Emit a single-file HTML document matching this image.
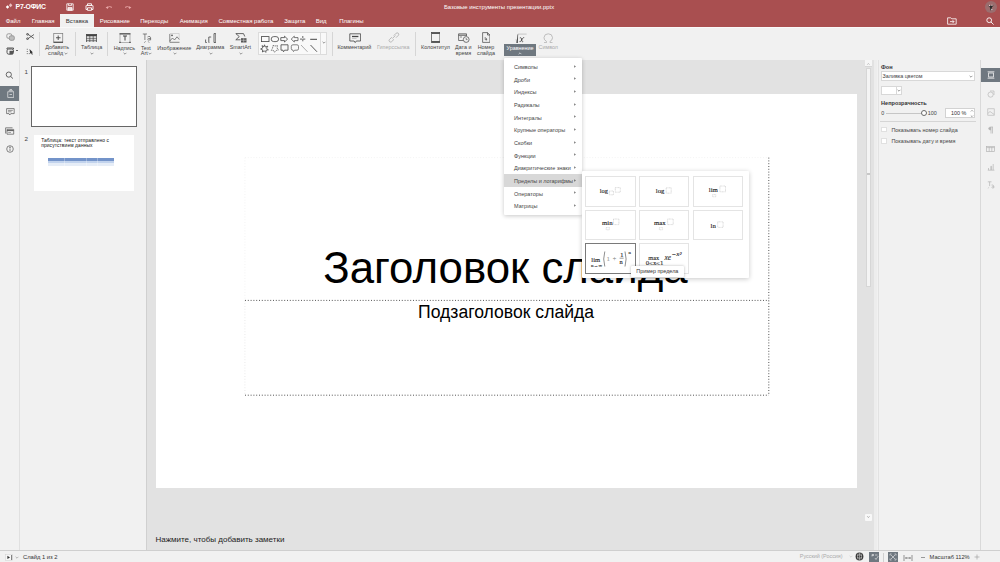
<!DOCTYPE html>
<html><head><meta charset="utf-8">
<style>
*{margin:0;padding:0;box-sizing:border-box}
html,body{width:1000px;height:562px;overflow:hidden;background:#f1f1f1;font-family:"Liberation Sans",sans-serif;color:#333}
.a{position:absolute}
.t{position:absolute;white-space:nowrap}
#hdr{left:0;top:0;width:1000px;height:26.5px;background:#a94f50}
#tb{left:0;top:26.5px;width:1000px;height:33px;background:#f1f1f1}
#lsb{left:0;top:59.5px;width:19.5px;height:491px;background:#f1f1f1;border-right:1px solid #e0e0e0}
#thp{left:19.5px;top:59.5px;width:127px;height:491px;background:#f1f1f1;border-right:1px solid #d0d0d0}
#main{left:146.5px;top:59.5px;width:727px;height:491px;background:#e2e2e2}
#slide{left:155.5px;top:94px;width:701px;height:393.5px;background:#fff}
#rp{left:873.7px;top:59.5px;width:107px;height:491px;background:#f1f1f1;border-left:3.8px solid #ededed}
#rsb{left:980px;top:59.5px;width:20px;height:491px;background:#f1f1f1;border-left:1px solid #d9d9d9}
#sb{left:0;top:550px;width:1000px;height:12px;background:#f1f1f1;border-top:1px solid #cfcfcf}
</style></head><body>
<div id="hdr" class="a"></div>
<div id="tb" class="a"></div>
<div id="lsb" class="a"></div>
<div id="thp" class="a"></div>
<div id="main" class="a"></div>
<div id="slide" class="a"></div>
<div id="rp" class="a"></div>
<div class="a" style="left:877.5px;top:59.5px;width:0.7px;height:491px;background:#e2e2e2"></div>
<div class="a" style="left:0;top:26.5px;width:1000px;height:1.3px;background:#f9f9f9"></div>
<div id="rsb" class="a"></div>
<div id="sb" class="a"></div>


<!-- header -->
<svg class="a" style="left:5px;top:2px" width="9" height="8" viewBox="0 0 9 8"><path d="M0.8 5 L2.5 3.2 L4.2 5 L2.5 6.8Z" fill="#fff"/><path d="M3.8 3.2 L5.6 1.2 L7.4 3.2 L5.6 5.2Z" fill="#ecc0c0"/></svg>
<div class="t" style="left:15.6px;top:2.5px;font-size:6.9px;line-height:8px;font-weight:bold;color:#fff;letter-spacing:-0.25px">Р7-ОФИС</div>
<svg class="a" style="left:65.5px;top:3px" width="8" height="8" viewBox="0 0 8 8" fill="none" stroke="#fff" stroke-width="0.8"><path d="M0.8 0.8 H7.2 V7.2 H0.8Z"/><path d="M2.4 0.8 V2.6 H5.6 V0.8"/><path d="M2 4.6 H6 V7.2 H2Z" fill="#f0dada"/></svg>
<svg class="a" style="left:84.5px;top:3px" width="9" height="8" viewBox="0 0 9 8" fill="none" stroke="#fff" stroke-width="0.9"><path d="M2.5 2.5 V0.8 H6.5 V2.5"/><path d="M2 6.5 H1 V2.8 Q1 2.5 1.5 2.5 H7.5 Q8 2.5 8 2.8 V6.5 H7"/><path d="M2.5 4.8 H6.5 V7.3 H2.5Z"/></svg>
<svg class="a" style="left:104.5px;top:4px" width="8" height="6" viewBox="0 0 8 6" fill="none" stroke="#e6a2a2" stroke-width="1"><path d="M2.2 3.6 Q4.5 1.6 7 3.4"/><path d="M0.6 3.6 L3 2.2 L3 5Z" fill="#eaa9a9" stroke="none"/></svg>
<svg class="a" style="left:123.5px;top:4px" width="8" height="6" viewBox="0 0 8 6" fill="none" stroke="#e6a2a2" stroke-width="1"><path d="M5.8 3.6 Q3.5 1.6 1 3.4"/><path d="M7.4 3.6 L5 2.2 L5 5Z" fill="#eaa9a9" stroke="none"/></svg>
<div class="t" style="left:444px;top:3px;font-size:5.9px;line-height:8px;color:#fff">Базовые инструменты презентации.pptx</div>
<div class="a" style="left:984.5px;top:0.8px;width:12px;height:12px;border-radius:50%;background:#9b6d6e"></div>
<svg class="a" style="left:985.5px;top:2px" width="10" height="10" viewBox="0 0 10 10"><path d="M2 3.5 L4 3 L5 3.8 L6.5 2.8 L7.5 3.8 L6 5 L5.5 8 L4.5 8.5 L4 5.5Z" fill="#2a2a2a"/><circle cx="3.5" cy="3.5" r="0.8" fill="#e9c8c8"/><circle cx="6" cy="3.2" r="0.7" fill="#e9c8c8"/><circle cx="5.8" cy="7.5" r="0.7" fill="#cfcfcf"/></svg>
<div class="a" style="left:60px;top:14px;width:34px;height:13px;background:#f1f1f1"></div>
<div class="t" style="left:5.7px;top:16.5px;font-size:6px;line-height:9px;color:#fff">Файл</div>
<div class="t" style="left:31.7px;top:16.5px;font-size:6px;line-height:9px;color:#fff">Главная</div>
<div class="t" style="left:65.7px;top:16.5px;font-size:6px;line-height:9px;color:#333">Вставка</div>
<div class="t" style="left:99.7px;top:16.5px;font-size:6px;line-height:9px;color:#fff">Рисование</div>
<div class="t" style="left:140.2px;top:16.5px;font-size:6px;line-height:9px;color:#fff">Переходы</div>
<div class="t" style="left:179.7px;top:16.5px;font-size:6px;line-height:9px;color:#fff">Анимация</div>
<div class="t" style="left:218.5px;top:16.5px;font-size:6px;line-height:9px;color:#fff">Совместная работа</div>
<div class="t" style="left:284.2px;top:16.5px;font-size:6px;line-height:9px;color:#fff">Защита</div>
<div class="t" style="left:315.7px;top:16.5px;font-size:6px;line-height:9px;color:#fff">Вид</div>
<div class="t" style="left:339.2px;top:16.5px;font-size:6px;line-height:9px;color:#fff">Плагины</div>
<svg class="a" style="left:946.5px;top:16.5px" width="10" height="8" viewBox="0 0 10 8" fill="none" stroke="#fff" stroke-width="0.8"><path d="M0.6 0.8 H3.8 L4.8 1.8 H9.2 V7.2 H0.6Z"/><path d="M3 4.6 H7 M5.6 3.2 L7 4.6 L5.6 6"/></svg>
<svg class="a" style="left:986px;top:17px" width="8" height="8" viewBox="0 0 8 8" fill="none" stroke="#fff" stroke-width="0.9"><circle cx="3.2" cy="3.2" r="2.4"/><path d="M5 5 L7.6 7.6"/></svg>

<!-- toolbar -->
<svg class="a" style="left:5.5px;top:32.5px" width="9" height="8" viewBox="0 0 9 8" fill="none" stroke="#9a9a9a" stroke-width="1"><rect x="0.8" y="0.8" width="5" height="4.5" rx="1.5"/><rect x="3.3" y="2.8" width="5" height="4.5" rx="1.5" fill="#bdbdbd"/></svg>
<svg class="a" style="left:25.5px;top:33px" width="9" height="7" viewBox="0 0 9 7" fill="none" stroke="#444" stroke-width="0.8"><path d="M1.5 1 L8 5.5 M1.5 6 L8 1.5"/><circle cx="1.5" cy="1.3" r="0.9"/><circle cx="1.5" cy="5.7" r="0.9"/></svg>
<svg class="a" style="left:5.5px;top:46.5px" width="9" height="8" viewBox="0 0 9 8" fill="none" stroke="#444" stroke-width="0.9"><path d="M1 2.2 V1 H7.5 V2.2"/><rect x="1" y="2" width="6.5" height="5.2" rx="1.8"/><rect x="3.5" y="3.8" width="3.5" height="3.4" fill="#555" stroke="none"/></svg>
<div class="a" style="left:16px;top:50px;width:2.2px;height:0.6px;background:#666"></div>
<svg class="a" style="left:25.5px;top:47.5px" width="8" height="7" viewBox="0 0 8 7"><g fill="#555"><rect x="0.8" y="0.8" width="0.9" height="0.9"/><rect x="0.8" y="3" width="0.9" height="0.9"/><rect x="0.8" y="5.2" width="0.9" height="0.9"/><rect x="2.8" y="5.2" width="0.9" height="0.9"/></g><path d="M3.5 1 L7 4.5 L5.8 4.6 L6.8 6.3 L6 6.7 L5 5 L4.2 5.8Z" fill="#333"/></svg>
<div class="a" style="left:38.9px;top:31.5px;width:1px;height:24.0px;background:#d6d6d6"></div>
<svg class="a" style="left:53px;top:33px" width="10.5" height="10" viewBox="0 0 10.5 10" fill="none" stroke="#444"><rect x="0.75" y="0.5" width="9" height="8.6" stroke-width="0.7" stroke="#777"/><path d="M0.5 9.3 H10" stroke-width="1"/><path d="M5.2 2.5 V7 M3 4.75 H7.5" stroke-width="0.9"/></svg>
<div class="t" style="left:7.100000000000001px;width:100px;text-align:center;top:43.40px;font-size:5.4px;line-height:8px;color:#444">Добавить</div>
<div class="t" style="left:5.600000000000001px;width:100px;text-align:center;top:49.00px;font-size:5.4px;line-height:8px;color:#444">слайд</div>
<svg class="a" style="left:64.3px;top:51.9px" width="4" height="3" viewBox="0 0 4 3"><path d="M0.6 0.8 L2 2.2 L3.4 0.8" fill="none" stroke="#555" stroke-width="0.6"/></svg>
<div class="a" style="left:74.5px;top:31.5px;width:1px;height:24.0px;background:#d6d6d6"></div>
<svg class="a" style="left:86px;top:33.5px" width="11" height="8.5" viewBox="0 0 11 8.5"><rect x="0.3" y="0.3" width="10.4" height="7.9" fill="none" stroke="#444" stroke-width="0.8"/><rect x="0.3" y="0.3" width="10.4" height="2" fill="#444"/><path d="M0.3 4.3 H10.7 M0.3 6.3 H10.7 M3.8 2 V8.2 M7.2 2 V8.2" stroke="#444" stroke-width="0.7"/></svg>
<div class="t" style="left:41.599999999999994px;width:100px;text-align:center;top:43.40px;font-size:5.4px;line-height:8px;color:#444">Таблица</div>
<svg class="a" style="left:89.8px;top:52.1px" width="4" height="3" viewBox="0 0 4 3"><path d="M0.6 0.8 L2 2.2 L3.4 0.8" fill="none" stroke="#555" stroke-width="0.6"/></svg>
<div class="a" style="left:107.2px;top:31.5px;width:1px;height:24.0px;background:#d6d6d6"></div>
<svg class="a" style="left:118.5px;top:32.5px" width="12" height="10.5" viewBox="0 0 12 10.5" fill="none" stroke="#444"><rect x="1" y="1" width="10" height="8.6" stroke-width="0.6" stroke="#888"/><path d="M0.5 0.8 H11.5" stroke-width="1.1"/><path d="M4 3 H8 M6 3 V7.5" stroke-width="1"/><rect x="0.3" y="8.8" width="1.4" height="1.4" fill="#444" stroke="none"/><rect x="10.3" y="8.8" width="1.4" height="1.4" fill="#444" stroke="none"/></svg>
<svg class="a" style="left:141.5px;top:32.5px" width="10" height="10.5" viewBox="0 0 10 10.5" fill="none" stroke="#555" stroke-width="0.7"><path d="M0.8 1 H5 M2.9 1 V7"/><path d="M5.5 4 Q6.5 3.2 8 3.6 Q8.6 4 8.6 5 V7.2 M8.6 5.5 Q6 5.2 5.6 6.3 Q5.8 7.5 8.4 6.8"/><path d="M2 9.8 L3.8 8.3 M5.8 8.3 L7.6 9.8" stroke-width="0.5"/></svg>
<div class="t" style="left:74.4px;width:100px;text-align:center;top:43.70px;font-size:5.4px;line-height:8px;color:#444">Надпись</div>
<svg class="a" style="left:122.7px;top:52.1px" width="4" height="3" viewBox="0 0 4 3"><path d="M0.6 0.8 L2 2.2 L3.4 0.8" fill="none" stroke="#555" stroke-width="0.6"/></svg>
<div class="t" style="left:95.9px;width:100px;text-align:center;top:43.70px;font-size:5.4px;line-height:8px;color:#444">Text</div>
<div class="t" style="left:94.30000000000001px;width:100px;text-align:center;top:49.00px;font-size:5.4px;line-height:8px;color:#444">Art</div>
<svg class="a" style="left:148.3px;top:51.8px" width="4" height="3" viewBox="0 0 4 3"><path d="M0.6 0.8 L2 2.2 L3.4 0.8" fill="none" stroke="#555" stroke-width="0.6"/></svg>
<svg class="a" style="left:168.5px;top:32.5px" width="11" height="10.5" viewBox="0 0 11 10.5" fill="none" stroke="#555" stroke-width="0.7"><path d="M0.8 1 V9.3 H10.5"/><path d="M0.8 8 L3.5 5 L5.5 7 L8 3.8 L10.3 6.5"/><circle cx="3" cy="2.3" r="0.9" fill="#555" stroke="none"/><path d="M0.8 0.5 H10.2 V6.8" stroke="#aaa" stroke-width="0.4"/></svg>
<div class="t" style="left:124.19999999999999px;width:100px;text-align:center;top:43.50px;font-size:5.4px;line-height:8px;color:#444">Изображение</div>
<svg class="a" style="left:172.5px;top:52.1px" width="4" height="3" viewBox="0 0 4 3"><path d="M0.6 0.8 L2 2.2 L3.4 0.8" fill="none" stroke="#555" stroke-width="0.6"/></svg>
<svg class="a" style="left:204.5px;top:33px" width="11.5" height="10" viewBox="0 0 11.5 10" fill="none" stroke="#444" stroke-width="0.8"><path d="M0.6 6.5 V9.5 H1.8"/><path d="M4.3 9.5 H3.8 V4 H6.2"/><path d="M9 0.6 H10.8 V9.5 H9 V0.6"/></svg>
<svg class="a" style="left:234.5px;top:33px" width="12" height="10" viewBox="0 0 12 10" fill="none" stroke="#444" stroke-width="0.8"><path d="M8.5 0.6 H0.8 L4.3 3.6 L0.8 6.8 H5.5"/><path d="M8.5 0.6 L9.8 3.5"/><rect x="6" y="5.2" width="5.5" height="4.3" fill="#555" stroke="none"/><path d="M6 7.3 H11.5 M8.7 5.2 V9.5" stroke="#ddd" stroke-width="0.5"/></svg>
<div class="t" style="left:160.2px;width:100px;text-align:center;top:43.30px;font-size:5.4px;line-height:8px;color:#444">Диаграмма</div>
<svg class="a" style="left:209.2px;top:51.7px" width="4" height="3" viewBox="0 0 4 3"><path d="M0.6 0.8 L2 2.2 L3.4 0.8" fill="none" stroke="#555" stroke-width="0.6"/></svg>
<div class="t" style="left:190.4px;width:100px;text-align:center;top:43.30px;font-size:5.4px;line-height:8px;color:#444">SmartArt</div>
<svg class="a" style="left:239.2px;top:51.7px" width="4" height="3" viewBox="0 0 4 3"><path d="M0.6 0.8 L2 2.2 L3.4 0.8" fill="none" stroke="#555" stroke-width="0.6"/></svg>
<div class="a" style="left:258.2px;top:32.4px;width:68.8px;height:22.4px;background:#f9f9f9;border:1px solid #dcdcdc"></div>
<div class="a" style="left:320.3px;top:33px;width:0.8px;height:21.5px;background:#dcdcdc"></div>
<svg class="a" style="left:259px;top:34px" width="61" height="20" viewBox="0 0 61 20" fill="none" stroke="#444" stroke-width="0.8">
<rect x="2.4" y="2.6" width="7.6" height="5"/>
<rect x="12.2" y="2.6" width="7.4" height="5" rx="2.5"/>
<path d="M21.8 3.6 H25.5 V2.2 L28.6 5.1 L25.5 8 V6.6 H21.8Z"/>
<path d="M39 3.6 H35.3 V2.2 L32.2 5.1 L35.3 8 V6.6 H39Z" stroke="#555"/>
<path d="M43.8 2 V8.2 M41 5.1 H46.8" stroke-width="0.9" stroke="#555" stroke-dasharray="2.2 0.9"/>
<path d="M51.2 5.3 H58" stroke-width="1"/>
<path d="M5.5 10.8 L6.3 13 L8.8 12.2 L7.4 14.3 L9.4 15.8 L7 16.2 L6.8 18.4 L5.3 16.8 L3.4 18 L3.7 15.9 L1.6 15 L3.8 13.9 L3 11.6 L4.9 12.8Z" stroke-width="0.8"/>
<path d="M14 11.5 L16 12 L18.5 11.5 L18 14 L19.5 16 L17 16.5 L15.5 18.3 L14.5 16.5 L12.3 16.3 L13.5 14.3Z" stroke-width="0.7" stroke-dasharray="1.2 0.6"/>
<path d="M22 10.8 H29 V16.2 H25.5 L24.5 17.8 L24 16.2 H22Z"/>
<path d="M34 10.8 H38 Q39.5 10.8 39.5 12.3 V14.8 Q39.5 16.2 38 16.2 H35.5 L34.5 17.6 L34 16.2 Q32.3 16.2 32.3 14.8 V12.3 Q32.3 10.8 34 10.8Z" stroke="#666"/>
<path d="M42 11 L48.5 17.8" stroke="#999"/>
<path d="M51.5 11 L58 17.8" stroke="#333"/>
</svg>
<svg class="a" style="left:321.6px;top:41.3px" width="4" height="3" viewBox="0 0 4 3"><path d="M0.6 0.8 L2 2.2 L3.4 0.8" fill="none" stroke="#555" stroke-width="0.6"/></svg>
<div class="a" style="left:331.9px;top:31.5px;width:1px;height:24.0px;background:#d6d6d6"></div>
<svg class="a" style="left:348.5px;top:32.5px" width="12.5" height="10.5" viewBox="0 0 12.5 10.5" fill="none" stroke="#444" stroke-width="0.8"><path d="M0.8 0.8 H11.6 V8 H7.3 L6.2 9.6 L5.1 8 H0.8Z"/><path d="M3 3.5 H9.4" stroke-width="1.3"/><path d="M3 5.5 H7.5" stroke="#aaa" stroke-width="0.6"/></svg>
<div class="t" style="left:304.4px;width:100px;text-align:center;top:43.30px;font-size:5.4px;line-height:8px;color:#444">Комментарий</div>
<svg class="a" style="left:387.5px;top:31.8px" width="12" height="11" viewBox="0 0 12 11" fill="none" stroke="#a9a9a9" stroke-width="0.8"><path d="M5.8 3.6 L8.2 1.2 Q9.2 0.4 10.3 1.3 Q11.2 2.3 10.4 3.3 L8 5.7"/><path d="M6 7.3 L3.6 9.7 Q2.6 10.5 1.5 9.6 Q0.6 8.6 1.4 7.6 L3.8 5.2"/><path d="M4.3 6.6 L7.4 3.5"/></svg>
<div class="t" style="left:343.2px;width:100px;text-align:center;top:43.30px;font-size:5.4px;line-height:8px;color:#aaa">Гиперссылка</div>
<div class="a" style="left:415.0px;top:31.5px;width:1px;height:24.0px;background:#d6d6d6"></div>
<svg class="a" style="left:430.8px;top:32px" width="9.5" height="11" viewBox="0 0 9.5 11" fill="none" stroke="#444"><rect x="0.6" y="0.6" width="8.3" height="9.8" stroke-width="0.7"/><path d="M0.6 1.2 H8.9" stroke-width="1.4"/><path d="M0.6 9.8 H8.9" stroke-width="1.4"/></svg>
<svg class="a" style="left:457.5px;top:32.8px" width="12" height="10" viewBox="0 0 12 10" fill="none" stroke="#444" stroke-width="0.7"><path d="M5.5 7.5 H0.6 V0.8 H8.5 V3"/><path d="M0.6 2.2 H8.5" stroke-width="0.9"/><path d="M2 4 H4" stroke-width="0.6"/><circle cx="8.2" cy="6.5" r="2.9" fill="#f1f1f1"/><path d="M8.2 5 V6.6 H9.5" stroke-width="0.6"/></svg>
<svg class="a" style="left:481.8px;top:32px" width="8.5" height="11" viewBox="0 0 8.5 11" fill="none" stroke="#444" stroke-width="0.7"><path d="M0.6 0.6 H5.5 L7.9 3 V10.4 H0.6Z"/><path d="M5.5 0.6 V3 H7.9"/><path d="M3.2 5 V7.7 H5.2 M4.4 6 V8.3" stroke-width="0.6"/></svg>
<div class="t" style="left:385.5px;width:100px;text-align:center;top:43.20px;font-size:5.4px;line-height:8px;color:#444">Колонтитул</div>
<div class="t" style="left:413.3px;width:100px;text-align:center;top:43.20px;font-size:5.4px;line-height:8px;color:#444">Дата и</div>
<div class="t" style="left:413.4px;width:100px;text-align:center;top:49.20px;font-size:5.4px;line-height:8px;color:#444">время</div>
<div class="t" style="left:436px;width:100px;text-align:center;top:43.20px;font-size:5.4px;line-height:8px;color:#444">Номер</div>
<div class="t" style="left:436px;width:100px;text-align:center;top:49.20px;font-size:5.4px;line-height:8px;color:#444">слайда</div>
<div class="a" style="left:504.2px;top:44.4px;width:31.6px;height:11.2px;background:#6f7880"></div>
<svg class="a" style="left:514px;top:32.5px" width="14" height="11" viewBox="0 0 14 11" fill="none"><path d="M1.6 6.8 L2.3 6.5 L3.2 10 L3.9 1.1 H12.6" stroke="#9a9a9a" stroke-width="0.5"/><path d="M2.5 10 L3.6 10 L4.1 1.6 L3.7 1.6Z" fill="#333"/><path d="M5.8 4.9 Q6.6 4.3 7.2 5 L8 8.3 Q8.4 9 9.2 8.5 M10.2 4.6 Q9.5 4.3 8.8 5.2 L6.8 8.3 Q6.2 9 5.5 8.6" stroke="#333" stroke-width="0.75"/></svg>
<div class="t" style="left:470px;width:100px;text-align:center;top:43.70px;font-size:5.4px;line-height:8px;color:#fff">Уравнение</div>
<svg class="a" style="left:518px;top:51.5px" width="4" height="3" viewBox="0 0 4 3"><path d="M0.6 2.2 L2 0.8 L3.4 2.2" fill="none" stroke="#fff" stroke-width="0.6"/></svg>
<svg class="a" style="left:543px;top:32.8px" width="10.5" height="10.5" viewBox="0 0 10.5 10.5" fill="none" stroke="#b0b0b0" stroke-width="0.8"><path d="M1 9.6 H3.5 V8.4 Q0.8 7 1 4.6 Q1.2 0.8 5.25 0.8 Q9.3 0.8 9.5 4.6 Q9.7 7 7 8.4 V9.6 H9.5"/></svg>
<div class="t" style="left:498.29999999999995px;width:100px;text-align:center;top:43.30px;font-size:5.4px;line-height:8px;color:#aaa">Символ</div>

<!-- left -->
<svg class="a" style="left:5px;top:70.5px" width="9" height="8" viewBox="0 0 9 8" fill="none" stroke="#444" stroke-width="0.8"><circle cx="3.8" cy="3.6" r="2.6"/><path d="M5.7 5.5 L8 7.6"/></svg>
<div class="a" style="left:0;top:85.8px;width:19px;height:14.9px;background:#6f7880"></div>
<svg class="a" style="left:6.5px;top:88.5px" width="7.5" height="9" viewBox="0 0 7.5 9" fill="none" stroke="#e8e8e8" stroke-width="0.7"><rect x="0.8" y="2.8" width="6" height="5.5"/><path d="M1.8 1.6 H5.8 M2.6 0.5 H5"/><path d="M2.5 5.5 H5" /></svg>
<svg class="a" style="left:5.5px;top:108px" width="9" height="8" viewBox="0 0 9 8" fill="none" stroke="#555" stroke-width="0.7"><path d="M0.6 0.6 H8.2 V5.6 H4.8 L3.8 7 L3 5.6 H0.6Z"/><path d="M2 2.4 H6.8 M2 3.8 H5.5" stroke-width="0.6"/></svg>
<svg class="a" style="left:5px;top:126.5px" width="9.5" height="8" viewBox="0 0 9.5 8" fill="none" stroke="#555" stroke-width="0.7"><path d="M0.6 6.5 V0.8 H7.5"/><path d="M2 2.4 H8.7 V7.2 H2Z"/><path d="M2 3.6 H8.7" stroke-width="1"/><path d="M3.2 5.5 H6" stroke-width="0.5"/></svg>
<svg class="a" style="left:5.8px;top:145px" width="8" height="8" viewBox="0 0 8 8" fill="none" stroke="#555" stroke-width="0.7"><circle cx="4" cy="4" r="3.3"/><path d="M4 3.4 V6"/><circle cx="4" cy="2.2" r="0.35" fill="#555"/></svg>
<div class="t" style="left:24.5px;top:68px;font-size:6.2px;line-height:8px;color:#444">1</div>
<div class="a" style="left:31px;top:65.8px;width:106px;height:61.2px;background:#fff;border:1.6px solid #666"></div>
<div class="t" style="left:24.5px;top:134.5px;font-size:6.2px;line-height:8px;color:#444">2</div>
<div class="a" style="left:33.5px;top:134.8px;width:100.5px;height:56px;background:#fff"></div>
<div class="t" style="left:41.2px;top:137.8px;font-size:4.9px;line-height:5px;color:#111;letter-spacing:0.1px">Таблица: текст отправлено с</div>
<div class="t" style="left:41.2px;top:142.8px;font-size:4.9px;line-height:5px;color:#111;letter-spacing:0.1px">присутствием данных</div>
<div class="a" style="left:48px;top:158.4px;width:66.4px;height:2.4px;background:#7393c9"></div>
<div class="a" style="left:48px;top:160.8px;width:66.4px;height:2.2px;background:#c2d3ed"></div>
<div class="a" style="left:48px;top:163px;width:66.4px;height:3px;background:#e6edf7"></div>
<div class="a" style="left:64.4px;top:158.4px;width:0.5px;height:7.6px;background:#fff;opacity:.3"></div><div class="a" style="left:86px;top:158.4px;width:0.5px;height:7.6px;background:#fff;opacity:.3"></div><div class="a" style="left:97px;top:158.4px;width:0.5px;height:7.6px;background:#fff;opacity:.3"></div>
<div class="a" style="left:864.9px;top:60.2px;width:6.9px;height:6.9px;background:#f6f6f6;border-bottom:0.5px solid #d6d6d6"></div>
<svg class="a" style="left:866px;top:61.5px" width="5" height="4" viewBox="0 0 5 4"><path d="M1.2 2.8 L2.4 1.4 L3.6 2.8" fill="none" stroke="#999" stroke-width="0.5"/></svg>
<div class="a" style="left:865.6px;top:67.7px;width:5.8px;height:219.7px;background:#f4f4f4;border:0.5px solid #d6d6d6"></div>
<div class="a" style="left:866.8px;top:172.6px;width:3.4px;height:2.6px;border-top:0.5px solid #c8c8c8;border-bottom:0.5px solid #c8c8c8"></div>
<div class="a" style="left:865px;top:513.5px;width:6.8px;height:7px;background:#f8f8f8;border-radius:1px"></div>
<svg class="a" style="left:866px;top:515px" width="5" height="4" viewBox="0 0 5 4"><path d="M1.2 1.2 L2.4 2.6 L3.6 1.2" fill="none" stroke="#777" stroke-width="0.5"/></svg>
<svg class="a" style="left:240px;top:150px" width="535" height="250" viewBox="240 150 535 250" fill="none">
<path d="M245 157.6 H768.8 M244.9 157.6 V300.4" stroke="#f0f0f0" stroke-width="0.8" stroke-dasharray="1 1.8"/>
<path d="M244.9 300.4 V395.2" stroke="#e4e4e4" stroke-width="0.8" stroke-dasharray="1 1.8"/>
<path d="M768.8 157.6 V395.2" stroke="#555" stroke-width="1" stroke-dasharray="1 1.8"/>
<path d="M245 300.4 H768.8 M245 395.2 H768.8" stroke="#555" stroke-width="1" stroke-dasharray="1 1.8"/>
</svg>

<!-- slide content -->
<div class="t" style="left:323.3px;top:243px;font-size:43.8px;line-height:50px;color:#000">Заголовок слайда</div>
<div class="t" style="left:418px;top:302.3px;font-size:17.6px;line-height:20px;color:#000">Подзаголовок слайда</div>
<div class="t" style="left:155.5px;top:535px;font-size:8px;line-height:10px;color:#222">Нажмите, чтобы добавить заметки</div>
<!-- menu -->
<div class="a" style="left:504px;top:57.6px;width:78px;height:157px;background:#fff;box-shadow:0 1px 4px rgba(0,0,0,0.22);border-radius:1px"></div>
<div class="t" style="left:514px;top:63.00px;font-size:5.5px;line-height:8px;color:#444">Символы</div>
<svg class="a" style="left:573.5px;top:64.70px" width="2" height="3" viewBox="0 0 2 3"><path d="M0.4 0.3 L1.7 1.5 L0.4 2.7Z" fill="#444"/></svg>
<div class="t" style="left:514px;top:75.65px;font-size:5.5px;line-height:8px;color:#444">Дроби</div>
<svg class="a" style="left:573.5px;top:77.35px" width="2" height="3" viewBox="0 0 2 3"><path d="M0.4 0.3 L1.7 1.5 L0.4 2.7Z" fill="#444"/></svg>
<div class="t" style="left:514px;top:88.30px;font-size:5.5px;line-height:8px;color:#444">Индексы</div>
<svg class="a" style="left:573.5px;top:90.00px" width="2" height="3" viewBox="0 0 2 3"><path d="M0.4 0.3 L1.7 1.5 L0.4 2.7Z" fill="#444"/></svg>
<div class="t" style="left:514px;top:100.95px;font-size:5.5px;line-height:8px;color:#444">Радикалы</div>
<svg class="a" style="left:573.5px;top:102.65px" width="2" height="3" viewBox="0 0 2 3"><path d="M0.4 0.3 L1.7 1.5 L0.4 2.7Z" fill="#444"/></svg>
<div class="t" style="left:514px;top:113.60px;font-size:5.5px;line-height:8px;color:#444">Интегралы</div>
<svg class="a" style="left:573.5px;top:115.30px" width="2" height="3" viewBox="0 0 2 3"><path d="M0.4 0.3 L1.7 1.5 L0.4 2.7Z" fill="#444"/></svg>
<div class="t" style="left:514px;top:126.25px;font-size:5.5px;line-height:8px;color:#444">Крупные операторы</div>
<svg class="a" style="left:573.5px;top:127.95px" width="2" height="3" viewBox="0 0 2 3"><path d="M0.4 0.3 L1.7 1.5 L0.4 2.7Z" fill="#444"/></svg>
<div class="t" style="left:514px;top:138.90px;font-size:5.5px;line-height:8px;color:#444">Скобки</div>
<svg class="a" style="left:573.5px;top:140.60px" width="2" height="3" viewBox="0 0 2 3"><path d="M0.4 0.3 L1.7 1.5 L0.4 2.7Z" fill="#444"/></svg>
<div class="t" style="left:514px;top:151.55px;font-size:5.5px;line-height:8px;color:#444">Функции</div>
<svg class="a" style="left:573.5px;top:153.25px" width="2" height="3" viewBox="0 0 2 3"><path d="M0.4 0.3 L1.7 1.5 L0.4 2.7Z" fill="#444"/></svg>
<div class="t" style="left:514px;top:164.20px;font-size:5.5px;line-height:8px;color:#444">Диакритические знаки</div>
<svg class="a" style="left:573.5px;top:165.90px" width="2" height="3" viewBox="0 0 2 3"><path d="M0.4 0.3 L1.7 1.5 L0.4 2.7Z" fill="#444"/></svg>
<div class="a" style="left:504px;top:173.75px;width:78px;height:12.8px;background:#d8d8d8"></div>
<div class="t" style="left:514px;top:176.85px;font-size:5.5px;line-height:8px;color:#444">Пределы и логарифмы</div>
<svg class="a" style="left:573.5px;top:178.55px" width="2" height="3" viewBox="0 0 2 3"><path d="M0.4 0.3 L1.7 1.5 L0.4 2.7Z" fill="#444"/></svg>
<div class="t" style="left:514px;top:189.50px;font-size:5.5px;line-height:8px;color:#444">Операторы</div>
<svg class="a" style="left:573.5px;top:191.20px" width="2" height="3" viewBox="0 0 2 3"><path d="M0.4 0.3 L1.7 1.5 L0.4 2.7Z" fill="#444"/></svg>
<div class="t" style="left:514px;top:202.15px;font-size:5.5px;line-height:8px;color:#444">Матрицы</div>
<svg class="a" style="left:573.5px;top:203.85px" width="2" height="3" viewBox="0 0 2 3"><path d="M0.4 0.3 L1.7 1.5 L0.4 2.7Z" fill="#444"/></svg>
<div class="a" style="left:581.8px;top:171.3px;width:167px;height:107px;background:#fff;box-shadow:0 1px 5px rgba(0,0,0,0.22);border-radius:1px"></div>
<div class="a" style="left:584.6px;top:176.2px;width:51px;height:30.4px;border:0.6px solid #e4e4e4"></div>
<div class="a" style="left:639.3px;top:176.2px;width:50px;height:30.4px;border:0.6px solid #e4e4e4"></div>
<div class="a" style="left:693.3px;top:176.2px;width:49.6px;height:30.4px;border:0.6px solid #e4e4e4"></div>
<div class="a" style="left:584.6px;top:209.9px;width:51px;height:30px;border:0.6px solid #e4e4e4"></div>
<div class="a" style="left:639.3px;top:209.9px;width:50px;height:30px;border:0.6px solid #e4e4e4"></div>
<div class="a" style="left:693.3px;top:209.9px;width:49.6px;height:30px;border:0.6px solid #e4e4e4"></div>
<div class="a" style="left:584.6px;top:243.2px;width:51px;height:31.2px;border:1px solid #7a7a7a"></div>
<div class="a" style="left:639.3px;top:243.2px;width:50px;height:31.2px;border:0.6px solid #e4e4e4"></div>
<svg class="a" style="left:580px;top:170px" width="170" height="110" viewBox="580 170 170 110" font-family="Liberation Serif" fill="#222" stroke="#222" stroke-width="0.12">
<g fill="none" stroke="#b4b4b4" stroke-width="0.5" stroke-dasharray="0.9 0.5">
<rect x="609.3" y="191" width="4.2" height="3.8"/>
<rect x="615.3" y="187.6" width="5" height="4.6"/>
<rect x="666.2" y="187.8" width="5" height="5.4"/>
<rect x="719.9" y="186" width="5.6" height="5.8"/>
<rect x="712.6" y="194.6" width="3.2" height="2.2" stroke="#bbb"/>
<rect x="613.5" y="219" width="5.4" height="5.6"/>
<rect x="606.2" y="227.6" width="3.2" height="2.2" stroke="#bbb"/>
<rect x="667.6" y="219" width="5.6" height="5.6"/>
<rect x="659.4" y="227.6" width="3.2" height="2.2" stroke="#bbb"/>
<rect x="717.7" y="221.8" width="5.4" height="5.6"/>
</g>
<text x="599.8" y="193.2" font-size="6.4">log</text>
<text x="655.8" y="193.2" font-size="6.8">log</text>
<text x="708.8" y="192" font-size="6.8">lim</text>
<text x="602" y="225" font-size="6.8">min</text>
<text x="654" y="225" font-size="6.8">max</text>
<text x="710.5" y="227.5" font-size="6.8">ln</text>
<text x="591.3" y="261.5" font-size="6.6">lim</text>
<text x="591" y="267.4" font-size="4.4" textLength="11" lengthAdjust="spacingAndGlyphs">n→∞</text>
<path d="M604.8 251.5 Q602.6 259 604.8 266.5" fill="none" stroke="#444" stroke-width="0.6"/>
<text x="606.8" y="261.4" font-size="6" fill="#999" stroke="#999" textLength="9.4" lengthAdjust="spacing">1 +</text>
<text x="620.2" y="256.8" font-size="6.4">1</text>
<path d="M619.6 258.2 H623.6" stroke="#333" stroke-width="0.5"/>
<text x="619.6" y="264.4" font-size="6.4">n</text>
<path d="M625 251.5 Q627.2 259 625 266.5" fill="none" stroke="#444" stroke-width="0.6"/>
<text x="628.6" y="254.4" font-size="4.8">n</text>
<text x="648.3" y="259.5" font-size="6.4" fill="#333">max</text>
<text x="664.4" y="259.5" font-size="7.4" font-style="italic" fill="#333">xe</text>
<text x="671.6" y="255.8" font-size="5.4" font-style="italic" fill="#333" textLength="10" lengthAdjust="spacingAndGlyphs">−x²</text>
<text x="645.8" y="265.2" font-size="5.2" fill="#444" textLength="17.6" lengthAdjust="spacingAndGlyphs">0≤x≤1</text>
</svg>
<div class="a" style="left:630.5px;top:265.8px;width:53.6px;height:11.2px;background:#fff;box-shadow:0 0.5px 3px rgba(0,0,0,0.28);border-radius:1px"></div>
<div class="t" style="left:636.3px;top:267.4px;font-size:5.4px;line-height:8px;color:#333">Пример предела</div>
<!-- right panel -->
<div class="t" style="left:881px;top:63px;font-size:5.6px;line-height:8px;font-weight:bold;color:#333">Фон</div>
<div class="a" style="left:880.6px;top:70.6px;width:94.8px;height:10.8px;background:#fff;border:0.6px solid #d8d8d8"></div>
<div class="t" style="left:882.5px;top:72px;font-size:5.4px;line-height:8px;color:#444">Заливка цветом</div>
<svg class="a" style="left:969px;top:74.5px" width="4" height="3" viewBox="0 0 4 3"><path d="M0.6 0.8 L2 2.2 L3.4 0.8" fill="none" stroke="#555" stroke-width="0.6"/></svg>
<div class="a" style="left:881px;top:86.2px;width:21.4px;height:9px;background:#fff;border:0.6px solid #d8d8d8"></div>
<div class="a" style="left:896px;top:86.2px;width:0.6px;height:9px;background:#d8d8d8"></div>
<svg class="a" style="left:897.3px;top:89.2px" width="4" height="3" viewBox="0 0 4 3"><path d="M0.6 0.8 L2 2.2 L3.4 0.8" fill="none" stroke="#555" stroke-width="0.6"/></svg>
<div class="t" style="left:881px;top:99.4px;font-size:5.6px;line-height:8px;font-weight:bold;color:#333">Непрозрачность</div>
<div class="t" style="left:881.3px;top:109px;font-size:5.4px;line-height:8px;color:#444">0</div>
<div class="a" style="left:886.2px;top:112.6px;width:36px;height:0.9px;background:#c6c6c6"></div>
<div class="a" style="left:920.8px;top:110px;width:6px;height:6px;border-radius:50%;background:#fff;border:0.6px solid #6a6a6a"></div>
<div class="t" style="left:927.8px;top:109px;font-size:5.4px;line-height:8px;color:#444">100</div>
<div class="a" style="left:945.4px;top:107.8px;width:30px;height:10.2px;background:#fff;border:0.6px solid #d2d2d2"></div>
<div class="t" style="left:951px;top:109px;font-size:5.4px;line-height:8px;color:#333">100 %</div>
<svg class="a" style="left:969.5px;top:108.6px" width="4" height="9" viewBox="0 0 4 9" fill="none" stroke="#555" stroke-width="0.5"><path d="M0.8 2.5 L2 1.3 L3.2 2.5 M0.8 6.5 L2 7.7 L3.2 6.5"/></svg>
<div class="a" style="left:880.4px;top:121.4px;width:95.6px;height:0.6px;background:#d5d5d5"></div>
<div class="a" style="left:881px;top:126.5px;width:6px;height:5.8px;background:#fff;border:0.5px solid #e0e0e0"></div>
<div class="t" style="left:891.5px;top:125.5px;font-size:5.4px;line-height:8px;color:#444">Показывать номер слайда</div>
<div class="a" style="left:881px;top:137.8px;width:6px;height:5.8px;background:#fff;border:0.5px solid #e0e0e0"></div>
<div class="t" style="left:891.5px;top:136.6px;font-size:5.4px;line-height:8px;color:#444">Показывать дату и время</div>
<div class="a" style="left:981px;top:68px;width:19px;height:13.7px;background:#6f7880"></div>
<svg class="a" style="left:986.5px;top:70.8px" width="8" height="8" viewBox="0 0 8 8" fill="none" stroke="#f2f2f2" stroke-width="0.8"><path d="M0.6 0.8 H7.4 M0.6 7.2 H7.4"/><rect x="1.6" y="2" width="4.8" height="4"/></svg>
<svg class="a" style="left:986.5px;top:89.5px" width="8" height="8" viewBox="0 0 8 8" fill="none" stroke="#b9b9b9" stroke-width="0.7"><path d="M3 1 H7 V5"/><circle cx="3.6" cy="4.6" r="2.6"/></svg>
<svg class="a" style="left:986.5px;top:107.5px" width="8" height="8" viewBox="0 0 8 8" fill="none" stroke="#b9b9b9" stroke-width="0.7"><rect x="0.8" y="0.8" width="6.4" height="6.4"/><path d="M0.8 5.5 L3 3.5 L7.2 6.5"/></svg>
<svg class="a" style="left:987.5px;top:125.8px" width="6" height="8" viewBox="0 0 6 8" fill="none" stroke="#b5b5b5" stroke-width="0.7"><path d="M3 7.5 V1 H5 M4.5 1 V7.5"/><path d="M3 1 Q0.6 1 0.6 2.5 Q0.6 4 3 4" fill="#b5b5b5"/></svg>
<svg class="a" style="left:986px;top:146px" width="9" height="6" viewBox="0 0 9 6" fill="none" stroke="#b5b5b5" stroke-width="0.7"><rect x="0.6" y="0.6" width="7.8" height="4.8"/><path d="M0.6 1.6 H8.4 M3.2 1 V5.4 M5.8 1 V5.4"/></svg>
<svg class="a" style="left:986.5px;top:163px" width="8" height="8" viewBox="0 0 8 8" fill="none" stroke="#b5b5b5" stroke-width="0.7"><path d="M0.8 7.2 H7.4 M1.5 7 V5 M3.8 7 V3.3 H4.6 V7 M6.2 7 V1"/></svg>
<svg class="a" style="left:986.5px;top:181px" width="8" height="8" viewBox="0 0 8 8" fill="none" stroke="#b5b5b5" stroke-width="0.7"><path d="M0.8 0.8 H4.5 M2.6 0.8 V5"/><path d="M4.5 4 Q6.5 3.5 6.8 5.2 V7 M6.8 5.5 Q4.8 5.5 4.8 6.5 Q5.5 7.4 6.8 6.8"/><path d="M0.8 7.4 L2.2 6.2" stroke-width="0.5"/></svg>
<svg class="a" style="left:5.3px;top:553.5px" width="8" height="7" viewBox="0 0 8 7"><rect x="0.5" y="0.5" width="6.8" height="5.8" fill="#f7f7f7" stroke="#cfcfcf" stroke-width="0.5"/><path d="M2.4 1.8 L5 3.4 L2.4 5Z" fill="#333"/><path d="M6.6 1 V6" stroke="#555" stroke-width="0.8"/></svg>
<svg class="a" style="left:15px;top:555.5px" width="4" height="3" viewBox="0 0 4 3"><path d="M0.6 0.8 L2 2.2 L3.4 0.8" fill="none" stroke="#777" stroke-width="0.5"/></svg>
<div class="t" style="left:23px;top:553px;font-size:5.8px;line-height:8px;color:#333">Слайд 1 из 2</div>
<div class="t" style="left:799.8px;top:552px;font-size:5.4px;line-height:8px;color:#aaa">Русский (Россия)</div>
<svg class="a" style="left:848.5px;top:555px" width="4" height="3" viewBox="0 0 4 3"><path d="M0.6 0.8 L2 2.2 L3.4 0.8" fill="none" stroke="#bbb" stroke-width="0.5"/></svg>
<svg class="a" style="left:854.5px;top:552.3px" width="9" height="9" viewBox="0 0 9 9"><circle cx="4.5" cy="4.5" r="3.9" fill="#3a3a3a"/><path d="M2 3.5 Q4.5 2 7 3.5 M2 5.5 Q4.5 7 7 5.5 M4.5 0.8 V8.2 M3 1.5 Q2 4.5 3 7.5 M6 1.5 Q7 4.5 6 7.5" stroke="#ddd" stroke-width="0.5" fill="none"/></svg>
<div class="a" style="left:869.4px;top:552.2px;width:10px;height:9.8px;background:#6f7880"></div>
<svg class="a" style="left:870.5px;top:553.3px" width="8" height="8" viewBox="0 0 8 8" fill="none" stroke="#eee" stroke-width="0.6"><path d="M1 3.5 V1.5 H3 M1 2.5 H3"/><path d="M4 5 L5 6.5 L7.3 3"/><path d="M4 2 H6.5"/></svg>
<div class="a" style="left:883.3px;top:552.5px;width:0.6px;height:9.5px;background:#d0d0d0"></div>
<div class="a" style="left:888.3px;top:552.2px;width:10px;height:9.8px;background:#6f7880"></div>
<svg class="a" style="left:889.3px;top:553.2px" width="8" height="8" viewBox="0 0 8 8" fill="none" stroke="#eee" stroke-width="0.6"><path d="M1 2.5 V1 H2.5 M5.5 1 H7 V2.5 M7 5.5 V7 H5.5 M2.5 7 H1 V5.5 M2 2 L6 6 M6 2 L2 6"/></svg>
<svg class="a" style="left:903px;top:553.5px" width="10" height="8" viewBox="0 0 10 8" fill="none" stroke="#555" stroke-width="0.6"><path d="M1 1 V7 M9 1 V7 M2.5 4 H7.5 M3.5 3 L2.5 4 L3.5 5 M6.5 3 L7.5 4 L6.5 5"/></svg>
<div class="a" style="left:921.3px;top:556.6px;width:4.2px;height:0.6px;background:#999"></div>
<div class="t" style="left:929.6px;top:552.6px;font-size:5.7px;line-height:8px;color:#333">Масштаб 112%</div>
<svg class="a" style="left:973.5px;top:553.8px" width="6" height="6" viewBox="0 0 6 6" fill="none" stroke="#999" stroke-width="0.6"><path d="M3 0.5 V5.5 M0.5 3 H5.5"/></svg>
</body></html>
